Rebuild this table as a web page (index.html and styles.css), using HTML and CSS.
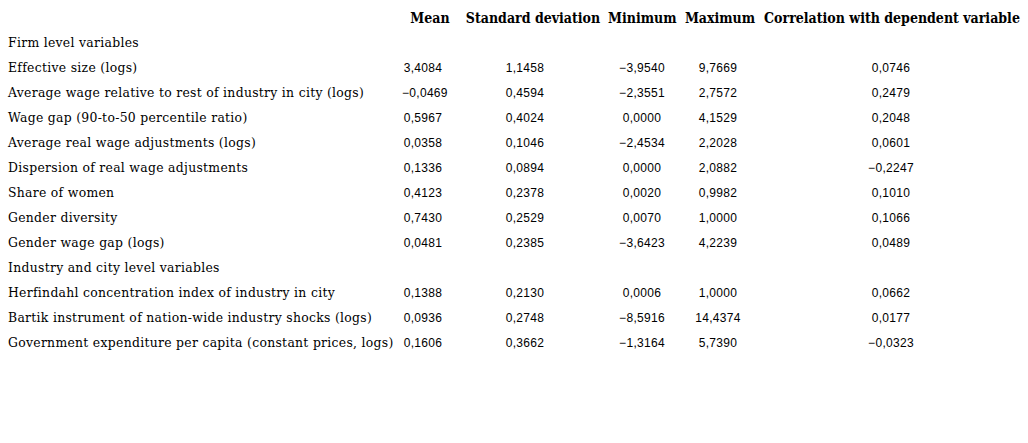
FILE: index.html
```html
<!DOCTYPE html>
<html>
<head>
<meta charset="utf-8">
<link rel="stylesheet" href="styles.css">
</head>
<body>
<table class="stats">
  <colgroup>
    <col class="c-label"><col class="c-mean"><col class="c-sd"><col class="c-min"><col class="c-max"><col class="c-corr">
  </colgroup>
  <thead>
    <tr><th></th><th>Mean</th><th>Standard deviation</th><th>Minimum</th><th>Maximum</th><th>Correlation with dependent variable</th></tr>
  </thead>
  <tbody>
    <tr class="section"><td>Firm level variables</td><td></td><td></td><td></td><td></td><td></td></tr>
    <tr><td>Effective size (logs)</td><td class="m">3,4084</td><td class="s">1,1458</td><td class="n">−3,9540</td><td class="x">9,7669</td><td class="r">0,0746</td></tr>
    <tr><td>Average wage relative to rest of industry in city (logs)</td><td class="m">−0,0469</td><td class="s">0,4594</td><td class="n">−2,3551</td><td class="x">2,7572</td><td class="r">0,2479</td></tr>
    <tr><td>Wage gap (90-to-50 percentile ratio)</td><td class="m">0,5967</td><td class="s">0,4024</td><td class="n">0,0000</td><td class="x">4,1529</td><td class="r">0,2048</td></tr>
    <tr><td>Average real wage adjustments (logs)</td><td class="m">0,0358</td><td class="s">0,1046</td><td class="n">−2,4534</td><td class="x">2,2028</td><td class="r">0,0601</td></tr>
    <tr><td>Dispersion of real wage adjustments</td><td class="m">0,1336</td><td class="s">0,0894</td><td class="n">0,0000</td><td class="x">2,0882</td><td class="r">−0,2247</td></tr>
    <tr><td>Share of women</td><td class="m">0,4123</td><td class="s">0,2378</td><td class="n">0,0020</td><td class="x">0,9982</td><td class="r">0,1010</td></tr>
    <tr><td>Gender diversity</td><td class="m">0,7430</td><td class="s">0,2529</td><td class="n">0,0070</td><td class="x">1,0000</td><td class="r">0,1066</td></tr>
    <tr><td>Gender wage gap (logs)</td><td class="m">0,0481</td><td class="s">0,2385</td><td class="n">−3,6423</td><td class="x">4,2239</td><td class="r">0,0489</td></tr>
    <tr class="section"><td>Industry and city level variables</td><td></td><td></td><td></td><td></td><td></td></tr>
    <tr><td>Herfindahl concentration index of industry in city</td><td class="m">0,1388</td><td class="s">0,2130</td><td class="n">0,0006</td><td class="x">1,0000</td><td class="r">0,0662</td></tr>
    <tr><td>Bartik instrument of nation-wide industry shocks (logs)</td><td class="m">0,0936</td><td class="s">0,2748</td><td class="n">−8,5916</td><td class="x">14,4374</td><td class="r">0,0177</td></tr>
    <tr><td>Government expenditure per capita (constant prices, logs)</td><td class="m">0,1606</td><td class="s">0,3662</td><td class="n">−1,3164</td><td class="x">5,7390</td><td class="r">−0,0323</td></tr>
  </tbody>
</table>
</body>
</html>
```

FILE: styles.css
```css
html, body {
  margin: 0;
  padding: 0;
  background: #ffffff;
  color: #000000;
}

body {
  padding: 5px 0 0 8px;
}

.stats {
  border-collapse: collapse;
  table-layout: fixed;
  width: 1012px;
}

.c-label { width: 394px; }
.c-mean { width: 56px; }
.c-sd { width: 150px; }
.c-min { width: 68px; }
.c-max { width: 88px; }
.c-corr { width: 256px; }

.stats th,
.stats td {
  height: 25px;
  padding: 0;
  white-space: nowrap;
}

.stats th {
  font-family: "DejaVu Serif Condensed", "DejaVu Serif", serif;
  font-weight: bold;
  font-size: 14px;
  text-align: center;
}

.stats td:first-child {
  font-family: "DejaVu Serif", serif;
  font-size: 12.4px;
  text-align: left;
}

.stats td {
  font-family: "Liberation Sans", sans-serif;
  font-size: 12px;
  letter-spacing: 0.3px;
  text-align: center;
}

.stats td.m { padding-right: 14px; }
.stats td.s { padding-right: 16px; }
.stats td.x { padding-right: 4px; }
.stats td.r { padding-right: 2px; }
```
